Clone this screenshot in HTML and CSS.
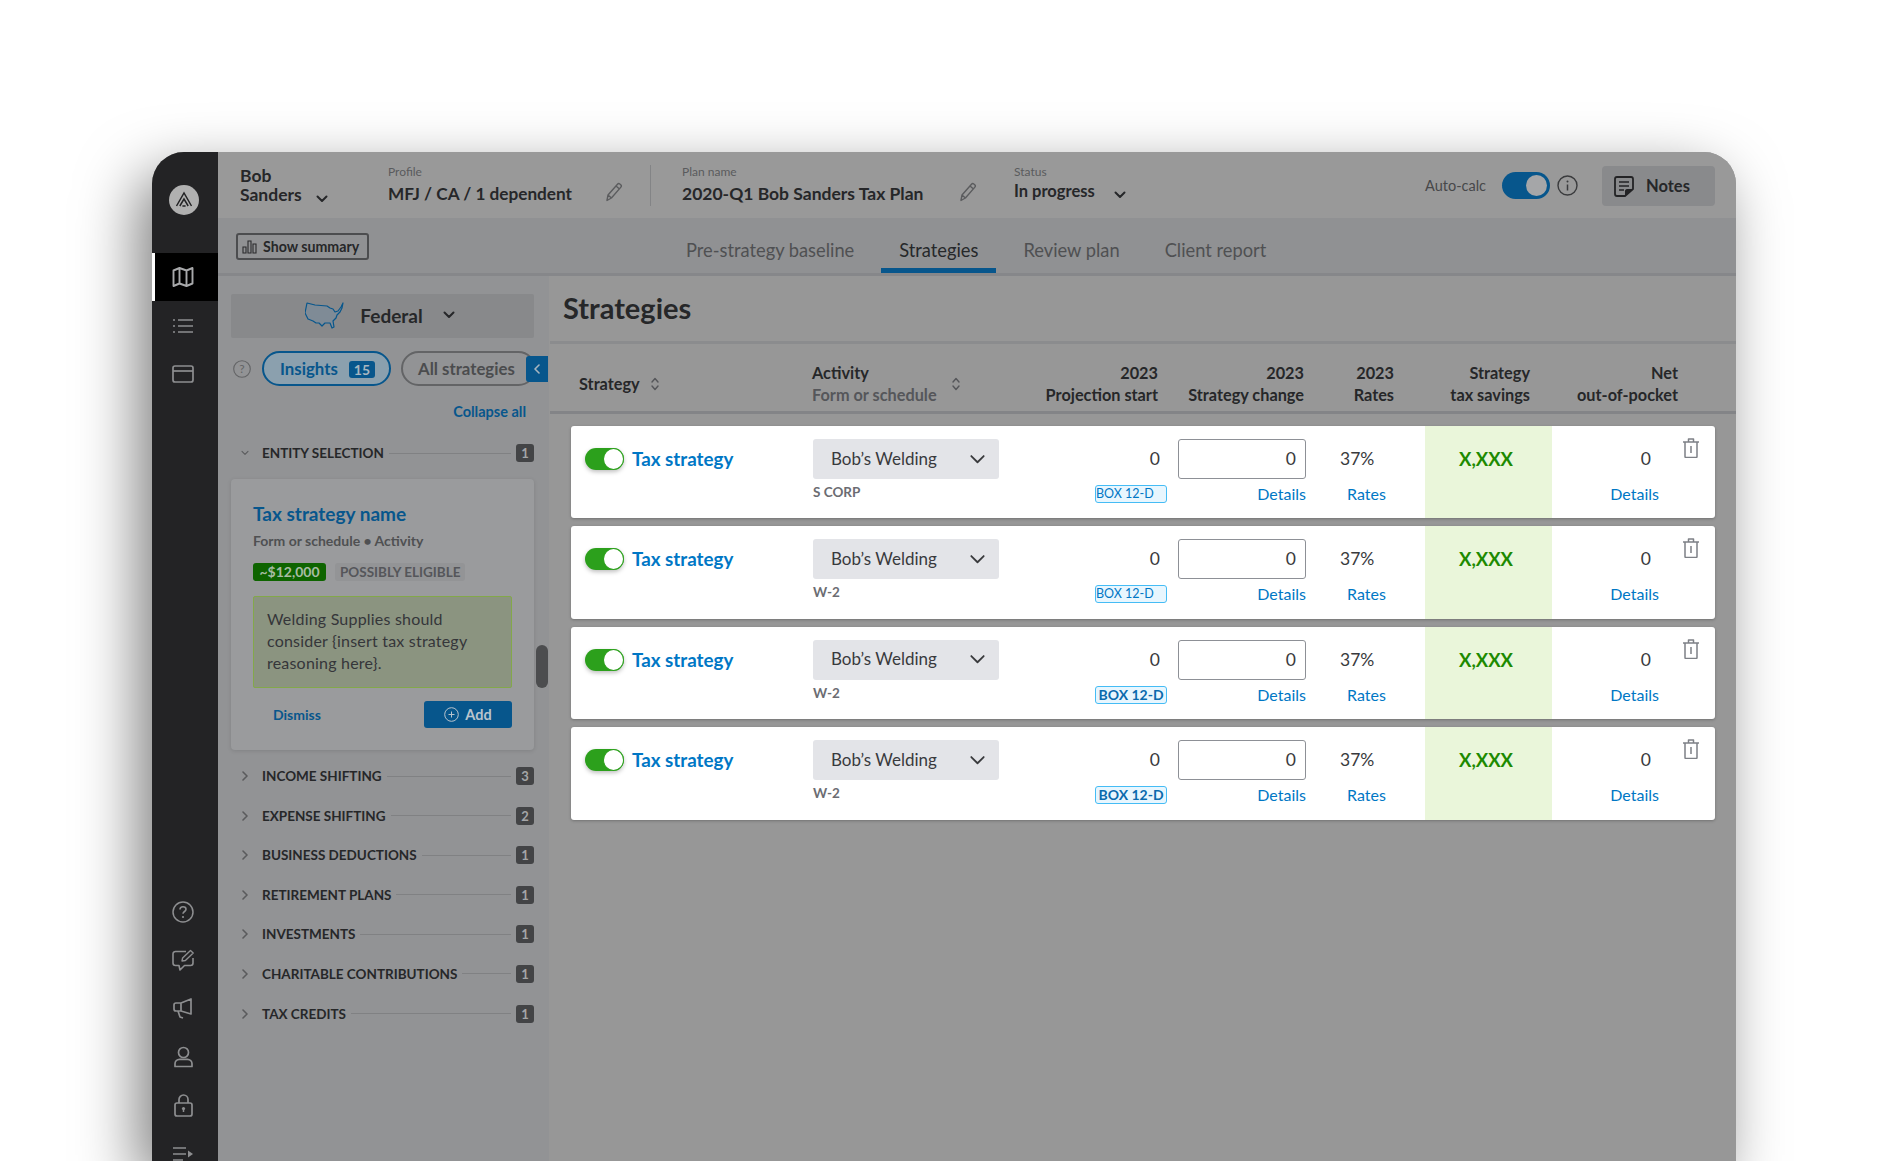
FILE: index.html
```html
<!DOCTYPE html>
<html lang="en">
<head>
  <meta charset="UTF-8">
  <meta name="viewport" content="width=device-width, initial-scale=1.0">
  <title>Strategies</title>
  <link rel="stylesheet" href="styles.css">
</head>
<body>
  <svg class="sprite" width="0" height="0">
    <symbol id="chev-down" viewBox="0 0 12 8"><path d="M1.5 1.5 6 6l4.5-4.5" fill="none" stroke="currentColor" stroke-linecap="round" stroke-linejoin="round"/></symbol>
    <symbol id="chev-right" viewBox="0 0 6 10"><path d="M1 1l4 4-4 4" fill="none" stroke="currentColor" stroke-width="1.6" stroke-linecap="round" stroke-linejoin="round"/></symbol>
    <symbol id="pencil" viewBox="0 0 18 20"><path d="M3 13 12.5 2.2c.6-.7 1.6-.8 2.3-.2l.9.8c.7.6.8 1.6.2 2.3L6.4 16 2 18.5z M3 13l3.4 3 M11 4l3.8 3.2" fill="none" stroke="currentColor" stroke-width="1.4" stroke-linejoin="round"/></symbol>
    <symbol id="sort" viewBox="0 0 8 14"><path d="M1 5l3-3.5L7 5M1 9l3 3.5L7 9" fill="none" stroke="currentColor" stroke-width="1.4" stroke-linecap="round" stroke-linejoin="round"/></symbol>
    <symbol id="trash" viewBox="0 0 18 20"><path d="M1 4h16M3 4v14.500c0 .5.400 1 1 1h10c.6 0 1-.5 1-1V4M6.500 4V1h5v3M9 8v7" fill="none" stroke="currentColor" stroke-width="1.500" stroke-linejoin="round"/></symbol>
  </svg>

  <div class="frame">
    <nav class="rail">
      <div class="logo">
        <svg width="18" height="18" viewBox="0 0 18 18"><path d="M1.500 15 9 2l7.500 13M4.800 15 9 8l4.200 7M7.400 15H10.600" fill="none" stroke="#232325" stroke-width="1.500"/></svg>
      </div>
      <a class="rail-item active">
        <svg width="22" height="22" viewBox="0 0 22 22"><path d="M1.500 4.500 7.500 2l7 2.500 6-2.500v15.500l-6 2.500-7-2.500-6 2.500zM7.500 2v15.500M14.500 4.500V20" fill="none" stroke="currentColor" stroke-width="1.900" stroke-linejoin="round"/></svg>
      </a>
      <a class="rail-item">
        <svg width="20" height="16" viewBox="0 0 20 16"><path d="M5 2h15M5 8h15M5 14h15M0 2h2M0 8h2M0 14h2" fill="none" stroke="currentColor" stroke-width="1.700"/></svg>
      </a>
      <a class="rail-item">
        <svg width="22" height="18" viewBox="0 0 22 18"><rect x="1" y="1" width="20" height="16" rx="2" fill="none" stroke="currentColor" stroke-width="1.700"/><path d="M1 6h20" stroke="currentColor" stroke-width="1.700"/></svg>
      </a>
      <div class="rail-bottom">
        <a class="rail-item">
          <svg width="22" height="22" viewBox="0 0 22 22"><circle cx="11" cy="11" r="10" fill="none" stroke="currentColor" stroke-width="1.500"/><path d="M8 8.500c0-1.800 1.300-2.700 3-2.700s3 1 3 2.500c0 2.200-3 2.200-3 4.500" fill="none" stroke="currentColor" stroke-width="1.600"/><circle cx="11" cy="16" r="1.100" fill="currentColor"/></svg>
        </a>
        <a class="rail-item">
          <svg width="23" height="23" viewBox="0 0 23 23"><path d="M14 2.500H3.500c-1.300 0-2.500 1-2.500 2.500v9c0 1.400 1.100 2.500 2.500 2.500H7l1 4.500 4.500-4.500h6c1.400 0 2.500-1.100 2.500-2.500V9" fill="none" stroke="currentColor" stroke-width="1.600" stroke-linejoin="round"/><path d="M10 12l.6-3L18.500 1.500l2.700 2.500-7.800 7.500z" fill="none" stroke="currentColor" stroke-width="1.400" stroke-linejoin="round"/></svg>
        </a>
        <a class="rail-item">
          <svg width="20" height="21" viewBox="0 0 20 21"><path d="M18 1v15L8 13H3c-1 0-2-.8-2-2V7c0-1.200 1-2 2-2h5zM8 5v8M5 13l2 6 3 1" fill="none" stroke="currentColor" stroke-width="1.700" stroke-linejoin="round"/></svg>
        </a>
        <a class="rail-item">
          <svg width="19" height="22" viewBox="0 0 19 22"><circle cx="9.500" cy="6.500" r="5" fill="none" stroke="currentColor" stroke-width="1.700"/><path d="M1 20.500v-2.800c0-2.500 2-4.400 4.500-4.400h8c2.500 0 4.500 2 4.500 4.400v2.800z" fill="none" stroke="currentColor" stroke-width="1.700" stroke-linejoin="round"/></svg>
        </a>
        <a class="rail-item">
          <svg width="19" height="23" viewBox="0 0 19 23"><rect x="1" y="9" width="17" height="13" rx="2" fill="none" stroke="currentColor" stroke-width="1.700"/><path d="M5 9V5.500a4.500 4.500 0 0 1 9 0V9" fill="none" stroke="currentColor" stroke-width="1.700"/><circle cx="9.500" cy="14.500" r="1.600" fill="currentColor"/><path d="M9.500 15v3" stroke="currentColor" stroke-width="1.500"/></svg>
        </a>
        <a class="rail-item">
          <svg width="20" height="16" viewBox="0 0 20 16"><path d="M0 2h13M0 8h13M0 14h10" fill="none" stroke="currentColor" stroke-width="1.700"/><path d="M15 4.500l5 3.500-5 3.500z" fill="currentColor"/></svg>
        </a>
      </div>
    </nav>

    <div class="content">
      <header class="topbar">
        <div class="client">
          <span>Bob</span>
          <span>Sanders <svg class="chev" width="12" height="8"><use href="#chev-down"/></svg></span>
        </div>
        <div class="field profile">
          <label>Profile</label>
          <div class="field-value">MFJ / CA / 1 dependent</div>
          <svg class="pencil" width="18" height="20"><use href="#pencil"/></svg>
        </div>
        <div class="field plan">
          <label>Plan name</label>
          <div class="field-value">2020-Q1 Bob Sanders Tax Plan</div>
          <svg class="pencil" width="18" height="20"><use href="#pencil"/></svg>
        </div>
        <div class="field status">
          <label>Status</label>
          <div class="field-value">In progress <svg class="chev" width="12" height="8"><use href="#chev-down"/></svg></div>
        </div>
        <div class="top-right">
          <span class="autocalc">Auto-calc</span>
          <span class="switch switch-top"></span>
          <svg width="21" height="21" viewBox="0 0 21 21"><circle cx="10.500" cy="10.500" r="9.500" fill="none" stroke="#3a3b3d" stroke-width="1.400"/><path d="M10.500 9.500v6" stroke="#3a3b3d" stroke-width="1.500"/><circle cx="10.500" cy="6.500" r="1" fill="#3a3b3d"/></svg>
          <button class="notes">
            <svg width="20" height="21" viewBox="0 0 20 21"><path d="M11 20H3c-1.100 0-2-.9-2-2V3c0-1.100.9-2 2-2h14c1.100 0 2 .9 2 2v10z" fill="none" stroke="#232325" stroke-width="1.800" stroke-linejoin="round"/><path d="M5 6h10M5 10h10M5 14h5" stroke="#232325" stroke-width="1.700"/><path d="M11 20v-5c0-1 .6-2 2-2h6z" fill="#232325"/></svg>
            Notes
          </button>
        </div>
      </header>

      <div class="tabbar">
        <button class="summary">
          <svg width="15" height="14" viewBox="0 0 15 14"><path d="M1 7h3v6H1zM6 1h3v12H6zM11 4h3v9h-3z" fill="none" stroke="#2a2b2d" stroke-width="1.100"/></svg>
          Show summary
        </button>
        <div class="tabs">
          <a class="tab">Pre-strategy baseline</a>
          <a class="tab current">Strategies</a>
          <a class="tab">Review plan</a>
          <a class="tab">Client report</a>
        </div>
      </div>

      <div class="workspace">
        <aside class="panel">
          <div class="jurisdiction">
            <svg width="40" height="27" viewBox="0 0 40 27"><path d="M2 1l8 2 12 1 3 2 3 1 2 3 3-1 3-4 2-4-1 5-2 4-3 3-1 3-3 3 1 6-2 1-2-5h-5l-3 3-3-3h-3l-3-2-5-2-3-6z" fill="#7f8b96" stroke="#07568c" stroke-width="1.200" stroke-linejoin="round"/></svg>
            <span>Federal</span>
            <svg class="chev" width="12" height="8"><use href="#chev-down"/></svg>
          </div>

          <div class="filters">
            <svg class="help" width="18" height="18" viewBox="0 0 18 18"><circle cx="9" cy="9" r="8.300" fill="none" stroke="#626365" stroke-width="1.100"/><text x="9" y="13" text-anchor="middle" class="help-mark">?</text></svg>
            <button class="pill pill-on">Insights <span class="pill-count">15</span></button>
            <button class="pill">All strategies</button>
            <button class="collapse-tab"><svg width="6" height="10"><use href="#chev-right" transform="matrix(-1 0 0 1 6 0)"/></svg></button>
          </div>

          <a class="collapse-all">Collapse all</a>

          <div class="group group-open">
            <svg class="group-chev" width="10" height="6"><use href="#chev-down"/></svg>
            <span class="group-name">ENTITY SELECTION</span>
            <span class="group-line"></span>
            <span class="count">1</span>
          </div>

          <article class="insight">
            <h3>Tax strategy name</h3>
            <p class="insight-form">Form or schedule • Activity</p>
            <div class="insight-tags">
              <span class="tag-amount">~$12,000</span>
              <span class="tag-status">POSSIBLY ELIGIBLE</span>
            </div>
            <p class="insight-note">Welding Supplies should consider {insert tax strategy reasoning here}.</p>
            <div class="insight-actions">
              <a class="dismiss">Dismiss</a>
              <button class="add">
                <svg width="15" height="15" viewBox="0 0 15 15"><circle cx="7.500" cy="7.500" r="6.800" fill="none" stroke="#b9c4cd" stroke-width="1"/><path d="M7.500 4.500v6M4.500 7.500h6" stroke="#b9c4cd" stroke-width="1"/></svg>
                Add
              </button>
            </div>
          </article>

          <div class="group"><svg class="group-chev" width="6" height="10"><use href="#chev-right"/></svg><span class="group-name">INCOME SHIFTING</span><span class="group-line"></span><span class="count">3</span></div>
          <div class="group"><svg class="group-chev" width="6" height="10"><use href="#chev-right"/></svg><span class="group-name">EXPENSE SHIFTING</span><span class="group-line"></span><span class="count">2</span></div>
          <div class="group"><svg class="group-chev" width="6" height="10"><use href="#chev-right"/></svg><span class="group-name">BUSINESS DEDUCTIONS</span><span class="group-line"></span><span class="count">1</span></div>
          <div class="group"><svg class="group-chev" width="6" height="10"><use href="#chev-right"/></svg><span class="group-name">RETIREMENT PLANS</span><span class="group-line"></span><span class="count">1</span></div>
          <div class="group"><svg class="group-chev" width="6" height="10"><use href="#chev-right"/></svg><span class="group-name">INVESTMENTS</span><span class="group-line"></span><span class="count">1</span></div>
          <div class="group"><svg class="group-chev" width="6" height="10"><use href="#chev-right"/></svg><span class="group-name">CHARITABLE CONTRIBUTIONS</span><span class="group-line"></span><span class="count">1</span></div>
          <div class="group"><svg class="group-chev" width="6" height="10"><use href="#chev-right"/></svg><span class="group-name">TAX CREDITS</span><span class="group-line"></span><span class="count">1</span></div>

          <div class="scroll-thumb"></div>
        </aside>

        <main class="main">
          <h1>Strategies</h1>

          <div class="thead">
            <div class="th th-sort">Strategy <svg width="8" height="14"><use href="#sort"/></svg></div>
            <div class="th th-activity">
              <div class="th-stack">Activity<br><span class="th-sub">Form or schedule</span></div>
              <svg width="8" height="14"><use href="#sort"/></svg>
            </div>
            <div class="th th-num"><span>2023</span><span>Projection start</span></div>
            <div class="th th-num th-clip"><span>2023</span><span>Strategy change</span></div>
            <div class="th th-num"><span>2023</span><span>Rates</span></div>
            <div class="th th-num"><span>Strategy</span><span>tax savings</span></div>
            <div class="th th-num"><span>Net</span><span>out-of-pocket</span></div>
          </div>

          <div class="rows">
            <div class="row">
              <div class="cell c-name"><span class="switch switch-row"></span><a class="name">Tax strategy</a></div>
              <div class="cell"><div class="select">Bob’s Welding <svg width="17" height="11"><use href="#chev-down"/></svg></div><div class="form">S CORP</div></div>
              <div class="cell c-start"><div class="val">0</div><span class="box box-thin">BOX 12-D</span></div>
              <div class="cell c-change"><div class="input">0</div><a class="link">Details</a></div>
              <div class="cell c-rate"><div class="val">37%</div><a class="link">Rates</a></div>
              <div class="cell c-save">X,XXX</div>
              <div class="cell c-net"><div class="net-body"><div class="val">0</div><a class="link">Details</a></div><svg class="trash" width="18" height="20"><use href="#trash"/></svg></div>
            </div>
            <div class="row">
              <div class="cell c-name"><span class="switch switch-row"></span><a class="name">Tax strategy</a></div>
              <div class="cell"><div class="select">Bob’s Welding <svg width="17" height="11"><use href="#chev-down"/></svg></div><div class="form">W-2</div></div>
              <div class="cell c-start"><div class="val">0</div><span class="box box-thin">BOX 12-D</span></div>
              <div class="cell c-change"><div class="input">0</div><a class="link">Details</a></div>
              <div class="cell c-rate"><div class="val">37%</div><a class="link">Rates</a></div>
              <div class="cell c-save">X,XXX</div>
              <div class="cell c-net"><div class="net-body"><div class="val">0</div><a class="link">Details</a></div><svg class="trash" width="18" height="20"><use href="#trash"/></svg></div>
            </div>
            <div class="row">
              <div class="cell c-name"><span class="switch switch-row"></span><a class="name">Tax strategy</a></div>
              <div class="cell"><div class="select">Bob’s Welding <svg width="17" height="11"><use href="#chev-down"/></svg></div><div class="form">W-2</div></div>
              <div class="cell c-start"><div class="val">0</div><span class="box">BOX 12-D</span></div>
              <div class="cell c-change"><div class="input">0</div><a class="link">Details</a></div>
              <div class="cell c-rate"><div class="val">37%</div><a class="link">Rates</a></div>
              <div class="cell c-save">X,XXX</div>
              <div class="cell c-net"><div class="net-body"><div class="val">0</div><a class="link">Details</a></div><svg class="trash" width="18" height="20"><use href="#trash"/></svg></div>
            </div>
            <div class="row">
              <div class="cell c-name"><span class="switch switch-row"></span><a class="name">Tax strategy</a></div>
              <div class="cell"><div class="select">Bob’s Welding <svg width="17" height="11"><use href="#chev-down"/></svg></div><div class="form">W-2</div></div>
              <div class="cell c-start"><div class="val">0</div><span class="box">BOX 12-D</span></div>
              <div class="cell c-change"><div class="input">0</div><a class="link">Details</a></div>
              <div class="cell c-rate"><div class="val">37%</div><a class="link">Rates</a></div>
              <div class="cell c-save">X,XXX</div>
              <div class="cell c-net"><div class="net-body"><div class="val">0</div><a class="link">Details</a></div><svg class="trash" width="18" height="20"><use href="#trash"/></svg></div>
            </div>
          </div>
        </main>
      </div>
    </div>
  </div>
</body>
</html>
```

FILE: styles.css
```css
html, body {
  height: 100%;
}

body {
  margin: 0;
  background-color: #ffffff;
  color: #262729;
  font-family: Lato, "Noto Sans", sans-serif;
  overflow: hidden;
  padding: 152px 153px 0 152px;
  box-sizing: border-box;
}

button {
  font-family: inherit;
  cursor: pointer;
}

.sprite {
  position: absolute;
}

.chev {
  stroke-width: 2;
}

.frame {
  display: flex;
  height: 100%;
  border-radius: 32px 32px 0 0;
  box-shadow: -14px 22px 60px rgba(0, 0, 0, 0.5);
  background-color: #979797;
}

/* left rail */
.rail {
  width: 66px;
  flex: none;
  background-color: #232325;
  border-top-left-radius: 32px;
  display: flex;
  flex-direction: column;
  color: #8d8e90;
  box-sizing: border-box;
  padding-top: 33px;
  overflow: hidden;
}

.logo {
  width: 30px;
  height: 30px;
  border-radius: 50%;
  background-color: #b0b0b0;
  margin: 0 0 38px 17px;
  display: flex;
  align-items: center;
  justify-content: center;
}

.rail-item {
  height: 48.400px;
  display: flex;
  align-items: center;
  justify-content: center;
  padding-right: 4px;
}

.rail-item.active {
  background-color: #000000;
  border-left: 3px solid #ffffff;
  color: #a8a9ab;
  padding-right: 7px;
}

.rail-bottom {
  margin-top: auto;
  margin-bottom: -17px;
}

.content {
  flex: 1;
  min-width: 0;
  display: flex;
  flex-direction: column;
}

/* top bar */
.topbar {
  height: 66px;
  flex: none;
  display: flex;
  align-items: center;
  background-color: #999999;
  border-top-right-radius: 32px;
  padding-right: 21px;
  box-sizing: border-box;
}

.client {
  width: 148px;
  flex: none;
  margin-left: 22px;
  font-size: 17.500px;
  font-weight: 700;
  line-height: 19px;
  display: flex;
  flex-direction: column;
}

.client .chev {
  margin-left: 10px;
  margin-bottom: -2px;
}

.field {
  position: relative;
  box-sizing: border-box;
  height: 41px;
}

.field label {
  display: block;
  font-size: 12px;
  line-height: 14px;
  color: #5a5b5d;
  margin-bottom: 5px;
}

.field-value {
  font-size: 17.500px;
  font-weight: 700;
  line-height: 20px;
}

.profile {
  width: 263px;
  flex: none;
  border-right: 1px solid #838486;
}

.profile .field-value {
  font-size: 17.200px;
}

.plan {
  margin-left: 31px;
  width: 332px;
  flex: none;
}

.status .field-value {
  margin-top: -3px;
  font-size: 16.500px;
}

.status .chev {
  margin-left: 15px;
  margin-bottom: -2px;
}

.pencil {
  position: absolute;
  top: 17px;
  color: #5b5c5e;
}

.profile .pencil {
  left: 217px;
}

.plan .pencil {
  left: 277px;
}

.top-right {
  margin-left: auto;
  display: flex;
  align-items: center;
}

.autocalc {
  font-size: 14.500px;
  color: #47484a;
  margin-right: 16px;
}

.switch {
  display: inline-block;
  position: relative;
  flex: none;
  border-radius: 14px;
  box-sizing: border-box;
}

.switch::after {
  content: "";
  position: absolute;
  top: 0;
  right: 0;
  border-radius: 50%;
  background-color: #ffffff;
  box-sizing: border-box;
}

.switch-top {
  width: 48px;
  height: 27px;
  background-color: #07568c;
  margin-right: 7px;
}

.switch-top::after {
  width: 21px;
  height: 21px;
  top: 3px;
  right: 3px;
  background-color: #a5a6a8;
}

.notes {
  margin: 2px 0 0 24px;
  width: 113px;
  height: 40px;
  border: 0;
  border-radius: 4px;
  background-color: #898a8c;
  color: #262729;
  display: flex;
  align-items: center;
  padding: 0 0 0 12px;
  gap: 12px;
  font-size: 16.500px;
  font-weight: 700;
}

/* tab bar */
.tabbar {
  height: 58px;
  flex: none;
  box-sizing: border-box;
  background-color: #909193;
  border-bottom: 3px solid #86878a;
  display: flex;
  align-items: stretch;
}

.summary {
  align-self: flex-start;
  margin: 15px 0 0 18px;
  width: 133px;
  height: 27px;
  flex: none;
  box-sizing: border-box;
  border: 2px solid #4c4d4f;
  border-radius: 3px;
  background-color: transparent;
  color: #262729;
  font-size: 14.200px;
  font-weight: 700;
  display: flex;
  align-items: center;
  gap: 6px;
  padding: 0 0 0 4px;
  white-space: nowrap;
}

.tabs {
  display: flex;
  margin-left: 299px;
  gap: 9px;
}

.tab {
  padding: 22px 18px 0;
  font-size: 18.300px;
  line-height: 20px;
  color: #4f5052;
  box-sizing: border-box;
  height: 55px;
}

.tab.current {
  color: #26282a;
  border-bottom: 5px solid #07568c;
}

.workspace {
  flex: 1;
  display: flex;
  min-height: 0;
}

/* left panel */
.panel {
  width: 331px;
  flex: none;
  box-sizing: border-box;
  position: relative;
  background-color: #929395;
  padding: 18px 15px 0 13px;
}

.jurisdiction {
  height: 44px;
  box-sizing: border-box;
  border-radius: 2px;
  background-color: #88898b;
  display: flex;
  align-items: center;
  justify-content: center;
  gap: 15px;
  font-size: 19px;
  font-weight: 700;
  padding: 0 5px 2px 0;
}

.jurisdiction .chev {
  margin-left: 5px;
}

.filters {
  position: relative;
  display: flex;
  align-items: center;
  margin-top: 13px;
  height: 35px;
  margin-right: -15px;
  overflow: hidden;
}

.help {
  margin: 0 2px 0 2px;
  flex: none;
}

.help-mark {
  font-size: 12px;
  font-family: Lato, sans-serif;
  fill: #626365;
}

.pill {
  height: 35px;
  box-sizing: border-box;
  border: 2px solid #636466;
  border-radius: 18px;
  background-color: transparent;
  color: #4b4c4e;
  font-size: 16.800px;
  font-weight: 700;
  padding: 0 0 0 15px;
  width: 135px;
  text-align: left;
  flex: none;
  margin-left: 10px;
  white-space: nowrap;
}

.pill-on {
  width: 129px;
  border-color: #07568c;
  background-color: #8ba0ae;
  color: #07568c;
  padding-left: 16px;
  margin-left: 9px;
}

.pill-count {
  display: inline-block;
  margin-left: 7px;
  background-color: #07568c;
  color: #a8b6c0;
  border-radius: 3px;
  font-size: 14px;
  line-height: 17px;
  padding: 0 5px;
}

.collapse-tab {
  position: absolute;
  right: 1px;
  top: 5px;
  width: 22px;
  height: 26px;
  padding: 0;
  border: 0;
  border-radius: 3px 0 0 3px;
  background-color: #07568c;
  color: #a8b6c0;
  display: flex;
  align-items: center;
  justify-content: center;
}

.collapse-all {
  display: block;
  margin: 18px 8px 0 0;
  text-align: right;
  font-size: 14.500px;
  line-height: 16px;
  font-weight: 700;
  color: #07568c;
}

.group {
  display: flex;
  align-items: center;
  height: 18px;
  margin-bottom: 21.600px;
  position: relative;
  padding-left: 31px;
}

.group-open {
  margin-top: 24px;
  margin-bottom: 17px;
}

.group-chev {
  position: absolute;
  left: 11px;
  color: #5a5b5d;
  stroke-width: 1.600;
}

.group-open .group-chev {
  left: 10px;
  width: 8px;
}

.group-name {
  font-size: 13.500px;
  font-weight: 700;
  white-space: nowrap;
}

.group-line {
  flex: 1;
  height: 1px;
  background-color: #808183;
  margin: 0 5px;
}

.count {
  flex: none;
  width: 18px;
  height: 18px;
  border-radius: 3px;
  background-color: #434446;
  color: #a5a6a8;
  font-size: 13px;
  font-weight: 700;
  line-height: 18px;
  text-align: center;
}

.insight {
  height: 271px;
  box-sizing: border-box;
  border-radius: 4px;
  background-color: #9a9b9d;
  box-shadow: 0 1px 4px rgba(0, 0, 0, 0.12);
  padding: 24px 22px 0 22px;
  margin-bottom: 17px;
}

.insight h3 {
  margin: 0;
  font-size: 19px;
  line-height: 22px;
  font-weight: 700;
  color: #07568c;
}

.insight-form {
  margin: 7px 0 0;
  font-size: 14px;
  line-height: 18px;
  font-weight: 700;
  color: #4f5052;
}

.insight-tags {
  display: flex;
  margin-top: 13px;
  gap: 9px;
}

.tag-amount {
  background-color: #0e6400;
  color: #a8bca4;
  border-radius: 3px;
  font-size: 14px;
  line-height: 18px;
  font-weight: 700;
  width: 73px;
  text-align: center;
}

.tag-status {
  background-color: #939496;
  color: #55565a;
  border-radius: 3px;
  font-size: 13.500px;
  line-height: 18px;
  font-weight: 700;
  padding: 0 5px;
}

.insight-note {
  margin: 15px 0 0;
  height: 92px;
  box-sizing: border-box;
  border: 1px solid #83a84a;
  border-radius: 2px;
  background-color: #8b9480;
  padding: 11px 13px 0;
  font-size: 16px;
  letter-spacing: 0.2px;
  line-height: 22px;
  color: #35363a;
}

.insight-actions {
  display: flex;
  align-items: center;
  justify-content: space-between;
  margin-top: 13px;
  padding-left: 20px;
}

.dismiss {
  font-size: 14px;
  font-weight: 700;
  color: #07568c;
}

.add {
  width: 88px;
  height: 27px;
  border: 0;
  border-radius: 3px;
  background-color: #07568c;
  color: #b9c4cd;
  font-size: 14.500px;
  font-weight: 700;
  display: flex;
  align-items: center;
  justify-content: center;
  gap: 6px;
}

.scroll-thumb {
  position: absolute;
  top: 369px;
  right: 1px;
  width: 12px;
  height: 43px;
  border-radius: 6px;
  background-color: #4c4d4f;
}

/* strategies table */
.main {
  flex: 1;
  min-width: 0;
  padding-left: 1px;
  box-sizing: border-box;
}

.main h1 {
  margin: 0;
  height: 68px;
  box-sizing: border-box;
  border-bottom: 3px solid #8b8c8e;
  padding: 14px 0 0 13px;
  font-size: 29px;
  line-height: 36px;
  font-weight: 700;
}

.thead {
  display: grid;
  grid-template-columns: 241px 176px 170px 146px 90px 136px 148px;
  height: 70px;
  box-sizing: border-box;
  border-bottom: 3px solid #838487;
  padding-left: 21px;
  padding-top: 18px;
  font-size: 16.300px;
  font-weight: 700;
  line-height: 22px;
}

.th-sort {
  padding-left: 8px;
  display: flex;
  align-items: center;
  gap: 11px;
  height: 44px;
}

.th-activity {
  display: flex;
  align-items: center;
  height: 44px;
}

.th-stack {
  width: 140px;
  flex: none;
}

.th-sub {
  color: #55565a;
}

.th svg {
  color: #55565a;
}

.th-num {
  display: flex;
  flex-direction: column;
  align-items: flex-end;
  white-space: nowrap;
  height: 44px;
}

.th-clip {
  margin-left: 30px;
  overflow: hidden;
}

.rows {
  padding: 12px 21px 0 21px;
  display: flex;
  flex-direction: column;
  gap: 8px;
}

.row {
  display: grid;
  grid-template-columns: 242px 186px 168px 139px 119px 127px 163px;
  height: 92.400px;
  background-color: #ffffff;
  border-radius: 3px;
  box-shadow: 0 1px 3px rgba(0, 0, 0, 0.25);
  font-size: 17px;
}

.cell {
  padding-top: 13px;
  box-sizing: border-box;
  min-width: 0;
}

.c-name {
  padding: 13px 0 0 14px;
  display: flex;
  align-items: flex-start;
  gap: 8px;
}

.switch-row {
  width: 39px;
  height: 22px;
  background-color: #2ca01c;
  margin-top: 9px;
  box-shadow: 0 2px 4px rgba(0, 0, 0, 0.25);
}

.switch-row::after {
  width: 21px;
  height: 22px;
  border: 1.500px solid #2ca01c;
}

.name {
  margin-top: 9px;
  font-size: 18.800px;
  line-height: 22px;
  font-weight: 700;
  color: #0077c5;
}

.select {
  height: 40px;
  box-sizing: border-box;
  border-radius: 3px;
  background-color: #e3e4e8;
  display: flex;
  align-items: center;
  justify-content: space-between;
  padding: 0 13px 2px 18px;
  font-size: 17px;
  color: #393a3d;
}

.select svg {
  color: #393a3d;
  stroke-width: 1.300;
  margin-top: 2px;
}

.form {
  margin-top: 5px;
  font-size: 13.500px;
  line-height: 16px;
  font-weight: 700;
  color: #6b6c72;
}

.val {
  height: 40px;
  line-height: 40px;
  color: #393a3d;
  font-size: 17.500px;
}

.c-start {
  display: flex;
  flex-direction: column;
  align-items: flex-end;
}

.c-start .val {
  padding-right: 7px;
}

.box {
  margin-top: 6px;
  width: 72px;
  height: 18px;
  box-sizing: border-box;
  border: 1px solid #45bcf5;
  border-radius: 3px;
  background-color: #e8f6fe;
  color: #0a6aad;
  font-size: 14px;
  font-weight: 700;
  line-height: 16px;
  text-align: center;
}

.box-thin {
  font-size: 12.500px;
  font-weight: 400;
  color: #0077c5;
  text-align: left;
}

.c-change {
  display: flex;
  flex-direction: column;
  align-items: flex-end;
}

.input {
  width: 128px;
  height: 40px;
  box-sizing: border-box;
  border: 1px solid #8d9096;
  border-radius: 3px;
  text-align: right;
  padding-right: 9px;
  line-height: 38px;
  color: #393a3d;
  font-size: 17.500px;
}

.link {
  display: block;
  margin-top: 6px;
  font-size: 16px;
  line-height: 18px;
  color: #0077c5;
}

.c-rate {
  padding-left: 34px;
}

.c-rate .link {
  padding-left: 7px;
}

.c-save {
  background-color: #eaf6da;
  color: #1d8a00;
  font-size: 18.500px;
  font-weight: 700;
  line-height: 40px;
  text-align: center;
  padding-right: 5px;
}

.c-net {
  display: flex;
  align-items: flex-start;
}

.net-body {
  width: 107px;
  text-align: right;
  flex: none;
}

.net-body .val {
  padding-right: 8px;
}

.trash {
  flex: none;
  margin: -1px 0 0 23px;
  color: #7d8086;
}
```
